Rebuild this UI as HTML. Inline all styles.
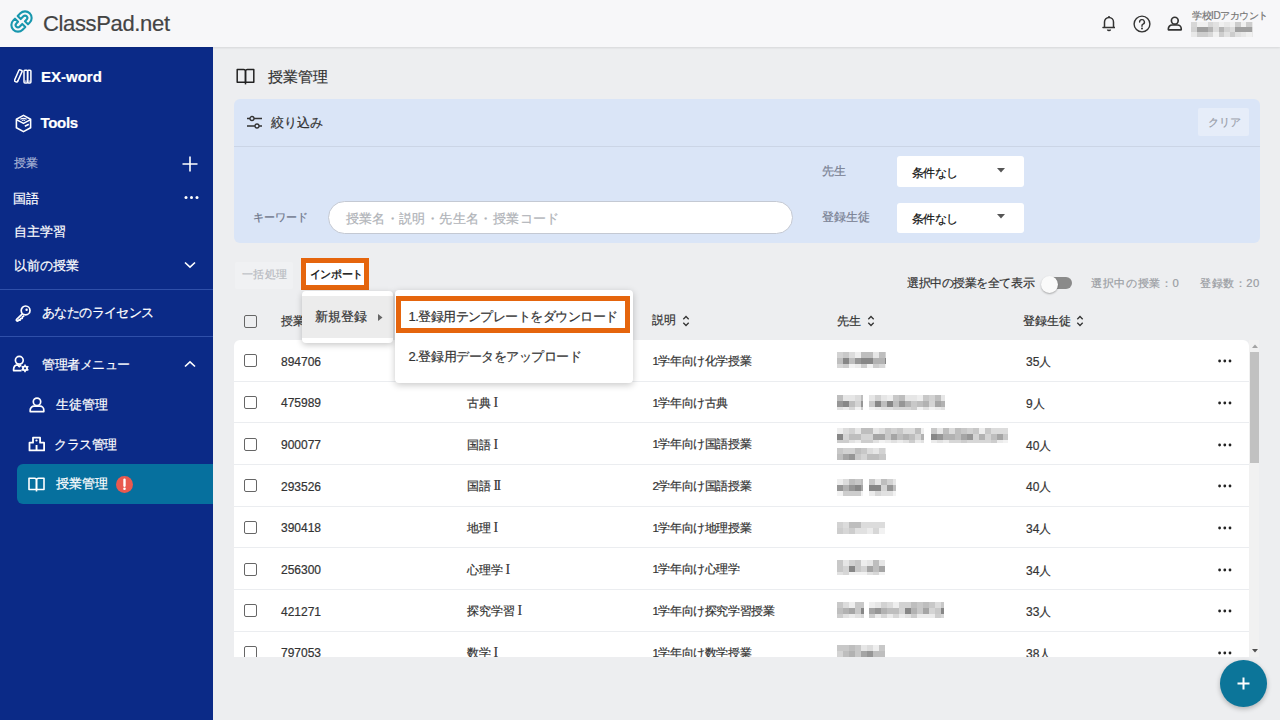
<!DOCTYPE html>
<html lang="ja">
<head>
<meta charset="utf-8">
<style>
*{box-sizing:border-box;margin:0;padding:0}
html,body{width:1280px;height:720px;overflow:hidden}
body{font-family:"Liberation Sans",sans-serif;background:#edeef0;color:#333;position:relative}
.abs{position:absolute}
.t{position:absolute;white-space:nowrap;line-height:1;-webkit-text-stroke:0.2px currentColor}
#hdr{position:absolute;left:0;top:0;width:1280px;height:46.7px;background:#f7f7f9;box-shadow:0 1px 2px rgba(0,0,0,.10);z-index:5}
#side{position:absolute;left:0;top:46.7px;width:213.3px;height:673.3px;background:#0b2a87;color:#fff}
.sw{color:#fff}
.hr{position:absolute;left:0;width:213px;height:1.4px;background:#2f4fa9}
#panel{position:absolute;left:234px;top:99px;width:1026px;height:144px;background:#dae5f7;border-radius:6px}
#table{position:absolute;left:234px;top:340px;width:1015px;height:317px;background:#fff;border-radius:6px 6px 0 0;overflow:hidden}
.row{position:absolute;left:0;width:1015px;height:41.5px;border-top:1px solid #eceef0}
.cb{position:absolute;width:13px;height:13px;border:1.6px solid #666;border-radius:2px}
.rn{font-family:"Liberation Serif",serif;font-size:14px;line-height:0;margin-left:2.5px;-webkit-text-stroke:0.1px currentColor}
.blur{position:absolute;background:#ccc;filter:blur(1px)}
</style>
</head>
<body>
<div id="hdr">
  <svg class="abs" style="left:8px;top:8px" width="27" height="27" viewBox="-13.5 -13.5 27 27">
  <g transform="rotate(-45)" fill="none" stroke="#1897ae" stroke-width="2.1" stroke-linejoin="round">
    <path d="M1.2 -6.6 H5 A6.6 6.6 0 0 1 5 6.6 H2.6 V2.3 H5 A2.3 2.3 0 0 0 5 -2.3 H1.2 Z"/>
    <path d="M-1.2 6.6 H-5 A6.6 6.6 0 0 1 -5 -6.6 H-2.6 V-2.3 H-5 A2.3 2.3 0 0 0 -5 2.3 H-1.2 Z"/>
  </g>
</svg>
  <div class="t" style="left:43px;top:12.5px;font-size:22px;color:#444;letter-spacing:-0.35px">ClassPad.net</div>
  <!-- bell -->
  <svg class="abs" style="left:1100px;top:14px" width="18" height="18" viewBox="0 0 18 18">
    <g fill="none" stroke="#333" stroke-width="1.5" stroke-linejoin="round">
      <path d="M4.5 13.5 V8 a4.5 4.5 0 0 1 9 0 V13.5 H3 H15"/>
      <path d="M7.5 15.5 a1.6 1.6 0 0 0 3 0"/>
      <path d="M9 2 V3.5"/>
    </g>
  </svg>
  <!-- help -->
  <svg class="abs" style="left:1133px;top:14.5px" width="18" height="18" viewBox="0 0 18 18">
    <g fill="none" stroke="#333" stroke-width="1.4">
      <circle cx="9" cy="9" r="7.9"/>
      <path d="M6.6 7 a2.4 2.4 0 1 1 3.4 2.2 c-.7 .3 -1 .8 -1 1.5 V11.3" stroke-linecap="round"/>
    </g>
    <circle cx="9" cy="13.4" r="1" fill="#333"/>
  </svg>
  <!-- user -->
  <svg class="abs" style="left:1167.3px;top:16.2px" width="15.6" height="15.2" viewBox="0 0 17 16">
    <g fill="none" stroke="#333" stroke-width="1.8">
      <circle cx="8.5" cy="4.8" r="3.7"/>
      <path d="M1.5 14.8 V13.5 a4 4 0 0 1 4 -4 H11.5 a4 4 0 0 1 4 4 V14.8 Z" stroke-linejoin="round"/>
    </g>
  </svg>
  <div class="t" style="left:1192px;top:11.3px;font-size:10px;letter-spacing:-0.45px;color:#777">学校IDアカウント</div>
  <div class="abs" style="left:1191px;top:22.3px;width:62px;height:14.5px;overflow:hidden;filter:blur(0.7px)"><div style="position:absolute;left:0.0px;top:0.0px;width:5.5px;height:4.9px;background:rgb(215,215,215)"></div><div style="position:absolute;left:5.5px;top:0.0px;width:5.5px;height:4.9px;background:rgb(240,240,240)"></div><div style="position:absolute;left:11.0px;top:0.0px;width:5.5px;height:4.9px;background:rgb(240,240,240)"></div><div style="position:absolute;left:16.5px;top:0.0px;width:5.5px;height:4.9px;background:rgb(215,215,215)"></div><div style="position:absolute;left:22.0px;top:0.0px;width:5.5px;height:4.9px;background:rgb(225,225,225)"></div><div style="position:absolute;left:27.5px;top:0.0px;width:5.5px;height:4.9px;background:rgb(240,240,240)"></div><div style="position:absolute;left:33.0px;top:0.0px;width:5.5px;height:4.9px;background:rgb(232,232,232)"></div><div style="position:absolute;left:38.5px;top:0.0px;width:5.5px;height:4.9px;background:rgb(240,240,240)"></div><div style="position:absolute;left:44.0px;top:0.0px;width:5.5px;height:4.9px;background:rgb(205,205,205)"></div><div style="position:absolute;left:49.5px;top:0.0px;width:5.5px;height:4.9px;background:rgb(240,240,240)"></div><div style="position:absolute;left:55.0px;top:0.0px;width:5.5px;height:4.9px;background:rgb(205,205,205)"></div><div style="position:absolute;left:60.5px;top:0.0px;width:5.5px;height:4.9px;background:rgb(232,232,232)"></div><div style="position:absolute;left:0.0px;top:4.9px;width:5.5px;height:4.9px;background:rgb(210,210,210)"></div><div style="position:absolute;left:5.5px;top:4.9px;width:5.5px;height:4.9px;background:rgb(160,160,160)"></div><div style="position:absolute;left:11.0px;top:4.9px;width:5.5px;height:4.9px;background:rgb(160,160,160)"></div><div style="position:absolute;left:16.5px;top:4.9px;width:5.5px;height:4.9px;background:rgb(180,180,180)"></div><div style="position:absolute;left:22.0px;top:4.9px;width:5.5px;height:4.9px;background:rgb(220,220,220)"></div><div style="position:absolute;left:27.5px;top:4.9px;width:5.5px;height:4.9px;background:rgb(180,180,180)"></div><div style="position:absolute;left:33.0px;top:4.9px;width:5.5px;height:4.9px;background:rgb(210,210,210)"></div><div style="position:absolute;left:38.5px;top:4.9px;width:5.5px;height:4.9px;background:rgb(220,220,220)"></div><div style="position:absolute;left:44.0px;top:4.9px;width:5.5px;height:4.9px;background:rgb(160,160,160)"></div><div style="position:absolute;left:49.5px;top:4.9px;width:5.5px;height:4.9px;background:rgb(160,160,160)"></div><div style="position:absolute;left:55.0px;top:4.9px;width:5.5px;height:4.9px;background:rgb(160,160,160)"></div><div style="position:absolute;left:60.5px;top:4.9px;width:5.5px;height:4.9px;background:rgb(220,220,220)"></div><div style="position:absolute;left:0.0px;top:9.8px;width:5.5px;height:4.9px;background:rgb(232,232,232)"></div><div style="position:absolute;left:5.5px;top:9.8px;width:5.5px;height:4.9px;background:rgb(205,205,205)"></div><div style="position:absolute;left:11.0px;top:9.8px;width:5.5px;height:4.9px;background:rgb(205,205,205)"></div><div style="position:absolute;left:16.5px;top:9.8px;width:5.5px;height:4.9px;background:rgb(215,215,215)"></div><div style="position:absolute;left:22.0px;top:9.8px;width:5.5px;height:4.9px;background:rgb(240,240,240)"></div><div style="position:absolute;left:27.5px;top:9.8px;width:5.5px;height:4.9px;background:rgb(205,205,205)"></div><div style="position:absolute;left:33.0px;top:9.8px;width:5.5px;height:4.9px;background:rgb(225,225,225)"></div><div style="position:absolute;left:38.5px;top:9.8px;width:5.5px;height:4.9px;background:rgb(205,205,205)"></div><div style="position:absolute;left:44.0px;top:9.8px;width:5.5px;height:4.9px;background:rgb(225,225,225)"></div><div style="position:absolute;left:49.5px;top:9.8px;width:5.5px;height:4.9px;background:rgb(232,232,232)"></div><div style="position:absolute;left:55.0px;top:9.8px;width:5.5px;height:4.9px;background:rgb(240,240,240)"></div><div style="position:absolute;left:60.5px;top:9.8px;width:5.5px;height:4.9px;background:rgb(232,232,232)"></div></div>
</div>
<div id="side"></div>
<!-- sidebar content -->
<svg class="abs" style="left:14px;top:68px" width="18" height="16" viewBox="0 0 18 16">
  <g fill="none" stroke="#fff" stroke-width="1.5" stroke-linejoin="round">
    <rect x="2.6" y="1.6" width="3.4" height="12.6" rx="0.9" transform="rotate(24 4.3 7.9)"/>
    <rect x="10" y="2.2" width="3.6" height="12.8" rx="0.9"/>
    <rect x="13.6" y="2.2" width="3.3" height="12.8" rx="0.9"/>
  </g>
  <g fill="#fff"><rect x="11" y="12.6" width="1.6" height="1"/><rect x="14.6" y="12.6" width="1.6" height="1"/><rect x="3" y="12.3" width="1.5" height="1" transform="rotate(27 3.8 12.8)"/></g>
</svg>
<div class="t sw" style="left:41px;top:69px;font-size:15px;font-weight:bold">EX-word</div>
<svg class="abs" style="left:14px;top:114px" width="19" height="19" viewBox="0 0 19 19">
  <g fill="none" stroke="#fff" stroke-width="1.6" stroke-linejoin="round">
    <path d="M9.5 1.4 L16.6 5.2 V13.8 L9.5 17.6 L2.4 13.8 V5.2 Z"/>
    <path d="M2.4 5.6 L9.5 9.4 L16.6 5.6"/>
    <path d="M6.3 5.3 a4.4 2.4 0 0 1 6.4 0" stroke-width="1.1"/>
    <path d="M7.9 6.6 a2 1.1 0 0 1 3.2 0" stroke-width="1.1"/>
    <path d="M10.8 12.3 L14.8 10.3" stroke-width="1.7"/>
  </g>
</svg>
<div class="t sw" style="left:40.5px;top:114.8px;font-size:15px;letter-spacing:-0.3px;font-weight:bold">Tools</div>
<div class="t" style="left:13.5px;top:157px;font-size:12px;color:#a9b4d6">授業</div>
<svg class="abs" style="left:182px;top:155.5px" width="16" height="16" viewBox="0 0 16 16"><path d="M8 0.5 V15.5 M0.5 8 H15.5" stroke="#fff" stroke-width="1.6"/></svg>
<div class="t sw" style="left:13px;top:191.5px;font-size:13px">国語</div>
<svg class="abs" style="left:184px;top:195px" width="15" height="5" viewBox="0 0 15 5"><g fill="#fff"><circle cx="2" cy="2.5" r="1.5"/><circle cx="7.5" cy="2.5" r="1.5"/><circle cx="13" cy="2.5" r="1.5"/></g></svg>
<div class="t sw" style="left:14px;top:225px;font-size:13px">自主学習</div>
<div class="t sw" style="left:13.5px;top:259px;font-size:13px">以前の授業</div>
<svg class="abs" style="left:184px;top:261px" width="12" height="8" viewBox="0 0 12 8"><path d="M1 1.5 L6 6.2 L11 1.5" fill="none" stroke="#fff" stroke-width="1.6"/></svg>
<div class="hr" style="top:288.8px"></div>
<svg class="abs" style="left:14px;top:304px" width="18" height="18" viewBox="0 0 18 18">
  <g fill="none" stroke="#fff" stroke-width="1.7" stroke-linejoin="round">
    <circle cx="11.6" cy="6.4" r="4.4"/>
    <path d="M8.6 9.6 L2.6 15.4 a1 1 0 0 0 1.4 1.4 L5 15.8 L6 16.2 L6.6 14.6 L8.2 14.4 L8.4 13 L10.2 11.6"/>
  </g>
  <circle cx="12.6" cy="5.8" r="1.2" fill="#fff"/>
</svg>
<div class="t sw" style="left:42px;top:305.8px;font-size:13px;letter-spacing:-0.6px">あなたのライセンス</div>
<div class="hr" style="top:336px"></div>
<svg class="abs" style="left:12px;top:355px" width="18" height="18" viewBox="0 0 18 18">
  <g fill="none" stroke="#fff" stroke-width="1.7" stroke-linejoin="round">
    <circle cx="7.3" cy="5.3" r="3.9"/>
    <path d="M9.5 15.6 H1.6 V14.2 a4.5 4.5 0 0 1 4 -4.4 L7.3 11.6 L9 9.9"/>
  </g>
  <g transform="translate(13,13.3)">
    <circle r="2.9" fill="#fff"/>
    <g stroke="#fff" stroke-width="1.6"><path d="M0 -3.9 V3.9 M-3.4 -1.95 L3.4 1.95 M-3.4 1.95 L3.4 -1.95"/></g>
    <circle r="1.1" fill="#0b2a87"/>
  </g>
</svg>
<div class="t sw" style="left:42px;top:357.8px;font-size:13px;letter-spacing:-0.5px">管理者メニュー</div>
<svg class="abs" style="left:184px;top:360px" width="12" height="8" viewBox="0 0 12 8"><path d="M1 6.5 L6 1.8 L11 6.5" fill="none" stroke="#fff" stroke-width="1.6"/></svg>
<svg class="abs" style="left:28.5px;top:397px" width="16" height="16" viewBox="0 0 16 16">
  <g fill="none" stroke="#fff" stroke-width="1.7" stroke-linejoin="round">
    <circle cx="8" cy="4.8" r="3.7"/>
    <path d="M1.2 14.6 V13 a3.8 3.8 0 0 1 3.8 -3.8 H11 a3.8 3.8 0 0 1 3.8 3.8 V14.6 Z"/>
  </g>
</svg>
<div class="t sw" style="left:56px;top:397.5px;font-size:13px">生徒管理</div>
<svg class="abs" style="left:28px;top:436px" width="18" height="16" viewBox="0 0 18 16">
  <g fill="none" stroke="#fff" stroke-width="1.8" stroke-linejoin="round">
    <path d="M5 1.7 H12.1 V6.7 H16.1 V14.4 H1.5 V6.7 H5 Z"/>
  </g>
  <circle cx="8.5" cy="4.5" r="1.1" fill="#fff"/>
  <rect x="7.6" y="9" width="1.9" height="5.5" fill="#fff"/>
</svg>
<div class="t sw" style="left:54px;top:437.8px;font-size:13px;letter-spacing:-0.5px">クラス管理</div>
<div class="abs" style="left:17px;top:464px;width:196px;height:40px;background:#06709e;border-radius:6px 0 0 6px"></div>
<svg class="abs" style="left:28px;top:477px" width="17" height="15" viewBox="0 0 17 15">
  <g fill="none" stroke="#fff" stroke-width="1.6" stroke-linejoin="round">
    <path d="M1 1.2 H6.5 a2 2 0 0 1 2 2 V12.5 H1 Z"/>
    <path d="M16 1.2 H10.5 a2 2 0 0 0 -2 2 V12.5 H16 Z"/>
    <path d="M8.5 12.5 V14.5"/>
  </g>
</svg>
<div class="t sw" style="left:56px;top:477px;font-size:13px">授業管理</div>
<svg class="abs" style="left:116px;top:476px" width="17" height="17" viewBox="0 0 17 17">
  <circle cx="8.5" cy="8.5" r="8.5" fill="#e9594f"/>
  <path d="M8.5 3.8 V9.8" stroke="#fff" stroke-width="2.4" stroke-linecap="round"/>
  <circle cx="8.5" cy="12.8" r="1.3" fill="#fff"/>
</svg>
<!-- main -->
<svg class="abs" style="left:236px;top:67.5px" width="19" height="17" viewBox="0 0 19 17">
  <g fill="none" stroke="#222" stroke-width="1.5" stroke-linejoin="round">
    <path d="M1.2 1.4 H7.6 a1.9 1.9 0 0 1 1.9 1.9 V14.2 H1.2 Z"/>
    <path d="M17.8 1.4 H11.4 a1.9 1.9 0 0 0 -1.9 1.9 V14.2 H17.8 Z"/>
    <path d="M9.5 14.2 V16.4"/>
  </g>
</svg>
<div class="t" style="left:268px;top:68.8px;font-size:15px;color:#333">授業管理</div>
<div id="panel"></div>
<svg class="abs" style="left:246px;top:115px" width="17" height="15" viewBox="0 0 17 15">
  <g fill="none" stroke="#333" stroke-width="1.3">
    <path d="M1 3.5 H4 M8 3.5 H16"/>
    <circle cx="6" cy="3.5" r="2"/>
    <path d="M1 11 H9 M13 11 H16"/>
    <circle cx="11" cy="11" r="2"/>
  </g>
</svg>
<div class="t" style="left:270.8px;top:117px;font-size:12.6px;color:#333;font-weight:500">絞り込み</div>
<div class="abs" style="left:1198px;top:107.5px;width:51px;height:28px;background:#e6edf9;border-radius:2px"></div>
<div class="t" style="left:1208px;top:117px;font-size:11px;color:#9aa0aa">クリア</div>
<div class="abs" style="left:234px;top:146px;width:1026px;height:1px;background:#cbd5e6"></div>
<div class="t" style="left:822px;top:165px;font-size:12px;color:#7a8294">先生</div>
<div class="abs" style="left:896.5px;top:156px;width:127.5px;height:30.5px;background:#fff;border-radius:3px"></div>
<div class="t" style="left:911.5px;top:166.8px;font-size:12px;letter-spacing:-0.5px;color:#111">条件なし</div>
<svg class="abs" style="left:997px;top:168px" width="8" height="5" viewBox="0 0 8 5"><path d="M0 0 H8 L4 4.5 Z" fill="#555"/></svg>
<div class="t" style="left:253px;top:211.5px;font-size:10.8px;color:#6e7689">キーワード</div>
<div class="abs" style="left:327.5px;top:200.8px;width:465px;height:33.7px;background:#fff;border:1px solid #c4c9d3;border-radius:17px"></div>
<div class="t" style="left:345.5px;top:211.5px;font-size:13px;letter-spacing:0.4px;color:#b0b3b8">授業名・説明・先生名・授業コード</div>
<div class="t" style="left:822px;top:211px;font-size:12px;color:#7a8294">登録生徒</div>
<div class="abs" style="left:896.5px;top:202.5px;width:127.5px;height:30px;background:#fff;border-radius:3px"></div>
<div class="t" style="left:911.5px;top:212.8px;font-size:12px;letter-spacing:-0.5px;color:#111">条件なし</div>
<svg class="abs" style="left:997px;top:214px" width="8" height="5" viewBox="0 0 8 5"><path d="M0 0 H8 L4 4.5 Z" fill="#555"/></svg>

<!-- action row -->
<div class="abs" style="left:235px;top:261.5px;width:58px;height:27.5px;background:#f0f1f3;border-radius:2px"></div>
<div class="t" style="left:241.8px;top:269px;font-size:11.2px;letter-spacing:0.5px;color:#b9bcc2">一括処理</div>
<div class="abs" style="left:301px;top:258px;width:68px;height:32px;border:5px solid #e5650d;background:#fff"></div>
<div class="t" style="left:309.8px;top:269px;font-size:11px;letter-spacing:-0.4px;color:#111;-webkit-text-stroke:0.35px #111">インポート</div>
<div class="t" style="left:907px;top:278.3px;font-size:11.5px;letter-spacing:-0.45px;color:#333">選択中の授業を全て表示</div>
<div class="abs" style="left:1045px;top:277px;width:27px;height:12px;background:#8a8a8a;border-radius:6px"></div>
<div class="abs" style="left:1040.5px;top:275.5px;width:17px;height:17px;background:#fafafa;border-radius:50%;box-shadow:0 1px 2px rgba(0,0,0,.3)"></div>
<div class="t" style="left:1091.3px;top:278.3px;font-size:11.3px;letter-spacing:0.6px;color:#9a9da3">選択中の授業：0</div>
<div class="t" style="left:1200.3px;top:278.3px;font-size:11.3px;letter-spacing:0.5px;color:#9a9da3">登録数：20</div>
<div id="table">
<div class="cb" style="left:10px;top:14.33px"></div>
<div class="t" style="left:47px;top:15.53px;font-size:12px;color:#333">894706</div>
<div class="t" style="left:233px;top:16.23px;font-size:11.8px;color:#333">化学<span class="rn">I</span></div>
<div class="t" style="left:418.5px;top:15.93px;font-size:11.5px;letter-spacing:-0.4px;color:#333">1学年向け化学授業</div>
<div class="t" style="left:792px;top:16.23px;font-size:12px;color:#333">35人</div>
<svg class="abs" style="left:984px;top:19.33px" width="14" height="4" viewBox="0 0 14 4"><g fill="#222"><circle cx="1.6" cy="2" r="1.4"/><circle cx="6.8" cy="2" r="1.4"/><circle cx="12" cy="2" r="1.4"/></g></svg>
<div class="abs" style="left:603.0px;top:12.0px;width:48.5px;height:16.0px;overflow:hidden;filter:blur(0.6px)"><div style="position:absolute;left:0.0px;top:0.0px;width:6px;height:6px;background:rgb(210,210,210)"></div><div style="position:absolute;left:6.0px;top:0.0px;width:6px;height:6px;background:rgb(200,200,200)"></div><div style="position:absolute;left:12.0px;top:0.0px;width:6px;height:6px;background:rgb(220,220,220)"></div><div style="position:absolute;left:18.0px;top:0.0px;width:6px;height:6px;background:rgb(238,238,238)"></div><div style="position:absolute;left:24.0px;top:0.0px;width:6px;height:6px;background:rgb(190,190,190)"></div><div style="position:absolute;left:30.0px;top:0.0px;width:6px;height:6px;background:rgb(190,190,190)"></div><div style="position:absolute;left:36.0px;top:0.0px;width:6px;height:6px;background:rgb(230,230,230)"></div><div style="position:absolute;left:42.0px;top:0.0px;width:6px;height:6px;background:rgb(190,190,190)"></div><div style="position:absolute;left:48.0px;top:0.0px;width:6px;height:6px;background:rgb(210,210,210)"></div><div style="position:absolute;left:0.0px;top:6.0px;width:6px;height:6px;background:rgb(190,190,190)"></div><div style="position:absolute;left:6.0px;top:6.0px;width:6px;height:6px;background:rgb(135,135,135)"></div><div style="position:absolute;left:12.0px;top:6.0px;width:6px;height:6px;background:rgb(190,190,190)"></div><div style="position:absolute;left:18.0px;top:6.0px;width:6px;height:6px;background:rgb(150,150,150)"></div><div style="position:absolute;left:24.0px;top:6.0px;width:6px;height:6px;background:rgb(135,135,135)"></div><div style="position:absolute;left:30.0px;top:6.0px;width:6px;height:6px;background:rgb(135,135,135)"></div><div style="position:absolute;left:36.0px;top:6.0px;width:6px;height:6px;background:rgb(178,178,178)"></div><div style="position:absolute;left:42.0px;top:6.0px;width:6px;height:6px;background:rgb(178,178,178)"></div><div style="position:absolute;left:48.0px;top:6.0px;width:6px;height:6px;background:rgb(135,135,135)"></div><div style="position:absolute;left:0.0px;top:12.0px;width:6px;height:6px;background:rgb(215,215,215)"></div><div style="position:absolute;left:6.0px;top:12.0px;width:6px;height:6px;background:rgb(205,205,205)"></div><div style="position:absolute;left:12.0px;top:12.0px;width:6px;height:6px;background:rgb(242,242,242)"></div><div style="position:absolute;left:18.0px;top:12.0px;width:6px;height:6px;background:rgb(235,235,235)"></div><div style="position:absolute;left:24.0px;top:12.0px;width:6px;height:6px;background:rgb(205,205,205)"></div><div style="position:absolute;left:30.0px;top:12.0px;width:6px;height:6px;background:rgb(242,242,242)"></div><div style="position:absolute;left:36.0px;top:12.0px;width:6px;height:6px;background:rgb(205,205,205)"></div><div style="position:absolute;left:42.0px;top:12.0px;width:6px;height:6px;background:rgb(215,215,215)"></div><div style="position:absolute;left:48.0px;top:12.0px;width:6px;height:6px;background:rgb(242,242,242)"></div></div>
<div class="abs" style="left:0;top:40.80px;width:1015px;height:1px;background:#ebedf0"></div>
<div class="cb" style="left:10px;top:56.00px"></div>
<div class="t" style="left:47px;top:57.20px;font-size:12px;color:#333">475989</div>
<div class="t" style="left:233px;top:57.90px;font-size:11.8px;color:#333">古典<span class="rn">I</span></div>
<div class="t" style="left:418.5px;top:57.60px;font-size:11.5px;letter-spacing:-0.4px;color:#333">1学年向け古典</div>
<div class="t" style="left:792px;top:57.90px;font-size:12px;color:#333">9人</div>
<svg class="abs" style="left:984px;top:61.00px" width="14" height="4" viewBox="0 0 14 4"><g fill="#222"><circle cx="1.6" cy="2" r="1.4"/><circle cx="6.8" cy="2" r="1.4"/><circle cx="12" cy="2" r="1.4"/></g></svg>
<div class="abs" style="left:603.0px;top:54.5px;width:26.0px;height:15.5px;overflow:hidden;filter:blur(0.6px)"><div style="position:absolute;left:0.0px;top:0.0px;width:6px;height:6px;background:rgb(190,190,190)"></div><div style="position:absolute;left:6.0px;top:0.0px;width:6px;height:6px;background:rgb(230,230,230)"></div><div style="position:absolute;left:12.0px;top:0.0px;width:6px;height:6px;background:rgb(230,230,230)"></div><div style="position:absolute;left:18.0px;top:0.0px;width:6px;height:6px;background:rgb(220,220,220)"></div><div style="position:absolute;left:24.0px;top:0.0px;width:6px;height:6px;background:rgb(190,190,190)"></div><div style="position:absolute;left:0.0px;top:6.0px;width:6px;height:6px;background:rgb(150,150,150)"></div><div style="position:absolute;left:6.0px;top:6.0px;width:6px;height:6px;background:rgb(135,135,135)"></div><div style="position:absolute;left:12.0px;top:6.0px;width:6px;height:6px;background:rgb(190,190,190)"></div><div style="position:absolute;left:18.0px;top:6.0px;width:6px;height:6px;background:rgb(212,212,212)"></div><div style="position:absolute;left:24.0px;top:6.0px;width:6px;height:6px;background:rgb(150,150,150)"></div><div style="position:absolute;left:0.0px;top:12.0px;width:6px;height:6px;background:rgb(225,225,225)"></div><div style="position:absolute;left:6.0px;top:12.0px;width:6px;height:6px;background:rgb(235,235,235)"></div><div style="position:absolute;left:12.0px;top:12.0px;width:6px;height:6px;background:rgb(215,215,215)"></div><div style="position:absolute;left:18.0px;top:12.0px;width:6px;height:6px;background:rgb(242,242,242)"></div><div style="position:absolute;left:24.0px;top:12.0px;width:6px;height:6px;background:rgb(205,205,205)"></div></div>
<div class="abs" style="left:635.0px;top:54.5px;width:76.0px;height:15.5px;overflow:hidden;filter:blur(0.6px)"><div style="position:absolute;left:0.0px;top:0.0px;width:6px;height:6px;background:rgb(230,230,230)"></div><div style="position:absolute;left:6.0px;top:0.0px;width:6px;height:6px;background:rgb(210,210,210)"></div><div style="position:absolute;left:12.0px;top:0.0px;width:6px;height:6px;background:rgb(230,230,230)"></div><div style="position:absolute;left:18.0px;top:0.0px;width:6px;height:6px;background:rgb(238,238,238)"></div><div style="position:absolute;left:24.0px;top:0.0px;width:6px;height:6px;background:rgb(200,200,200)"></div><div style="position:absolute;left:30.0px;top:0.0px;width:6px;height:6px;background:rgb(190,190,190)"></div><div style="position:absolute;left:36.0px;top:0.0px;width:6px;height:6px;background:rgb(230,230,230)"></div><div style="position:absolute;left:42.0px;top:0.0px;width:6px;height:6px;background:rgb(230,230,230)"></div><div style="position:absolute;left:48.0px;top:0.0px;width:6px;height:6px;background:rgb(238,238,238)"></div><div style="position:absolute;left:54.0px;top:0.0px;width:6px;height:6px;background:rgb(200,200,200)"></div><div style="position:absolute;left:60.0px;top:0.0px;width:6px;height:6px;background:rgb(210,210,210)"></div><div style="position:absolute;left:66.0px;top:0.0px;width:6px;height:6px;background:rgb(190,190,190)"></div><div style="position:absolute;left:72.0px;top:0.0px;width:6px;height:6px;background:rgb(230,230,230)"></div><div style="position:absolute;left:0.0px;top:6.0px;width:6px;height:6px;background:rgb(200,200,200)"></div><div style="position:absolute;left:6.0px;top:6.0px;width:6px;height:6px;background:rgb(135,135,135)"></div><div style="position:absolute;left:12.0px;top:6.0px;width:6px;height:6px;background:rgb(190,190,190)"></div><div style="position:absolute;left:18.0px;top:6.0px;width:6px;height:6px;background:rgb(135,135,135)"></div><div style="position:absolute;left:24.0px;top:6.0px;width:6px;height:6px;background:rgb(190,190,190)"></div><div style="position:absolute;left:30.0px;top:6.0px;width:6px;height:6px;background:rgb(150,150,150)"></div><div style="position:absolute;left:36.0px;top:6.0px;width:6px;height:6px;background:rgb(178,178,178)"></div><div style="position:absolute;left:42.0px;top:6.0px;width:6px;height:6px;background:rgb(200,200,200)"></div><div style="position:absolute;left:48.0px;top:6.0px;width:6px;height:6px;background:rgb(190,190,190)"></div><div style="position:absolute;left:54.0px;top:6.0px;width:6px;height:6px;background:rgb(178,178,178)"></div><div style="position:absolute;left:60.0px;top:6.0px;width:6px;height:6px;background:rgb(212,212,212)"></div><div style="position:absolute;left:66.0px;top:6.0px;width:6px;height:6px;background:rgb(165,165,165)"></div><div style="position:absolute;left:72.0px;top:6.0px;width:6px;height:6px;background:rgb(178,178,178)"></div><div style="position:absolute;left:0.0px;top:12.0px;width:6px;height:6px;background:rgb(242,242,242)"></div><div style="position:absolute;left:6.0px;top:12.0px;width:6px;height:6px;background:rgb(235,235,235)"></div><div style="position:absolute;left:12.0px;top:12.0px;width:6px;height:6px;background:rgb(225,225,225)"></div><div style="position:absolute;left:18.0px;top:12.0px;width:6px;height:6px;background:rgb(225,225,225)"></div><div style="position:absolute;left:24.0px;top:12.0px;width:6px;height:6px;background:rgb(215,215,215)"></div><div style="position:absolute;left:30.0px;top:12.0px;width:6px;height:6px;background:rgb(215,215,215)"></div><div style="position:absolute;left:36.0px;top:12.0px;width:6px;height:6px;background:rgb(215,215,215)"></div><div style="position:absolute;left:42.0px;top:12.0px;width:6px;height:6px;background:rgb(205,205,205)"></div><div style="position:absolute;left:48.0px;top:12.0px;width:6px;height:6px;background:rgb(242,242,242)"></div><div style="position:absolute;left:54.0px;top:12.0px;width:6px;height:6px;background:rgb(225,225,225)"></div><div style="position:absolute;left:60.0px;top:12.0px;width:6px;height:6px;background:rgb(242,242,242)"></div><div style="position:absolute;left:66.0px;top:12.0px;width:6px;height:6px;background:rgb(235,235,235)"></div><div style="position:absolute;left:72.0px;top:12.0px;width:6px;height:6px;background:rgb(225,225,225)"></div></div>
<div class="abs" style="left:0;top:82.47px;width:1015px;height:1px;background:#ebedf0"></div>
<div class="cb" style="left:10px;top:97.67px"></div>
<div class="t" style="left:47px;top:98.87px;font-size:12px;color:#333">900077</div>
<div class="t" style="left:233px;top:99.57px;font-size:11.8px;color:#333">国語<span class="rn">I</span></div>
<div class="t" style="left:418.5px;top:99.27px;font-size:11.5px;letter-spacing:-0.4px;color:#333">1学年向け国語授業</div>
<div class="t" style="left:792px;top:99.57px;font-size:12px;color:#333">40人</div>
<svg class="abs" style="left:984px;top:102.67px" width="14" height="4" viewBox="0 0 14 4"><g fill="#222"><circle cx="1.6" cy="2" r="1.4"/><circle cx="6.8" cy="2" r="1.4"/><circle cx="12" cy="2" r="1.4"/></g></svg>
<div class="abs" style="left:603.0px;top:87.5px;width:87.0px;height:15.0px;overflow:hidden;filter:blur(0.6px)"><div style="position:absolute;left:0.0px;top:0.0px;width:6px;height:6px;background:rgb(238,238,238)"></div><div style="position:absolute;left:6.0px;top:0.0px;width:6px;height:6px;background:rgb(220,220,220)"></div><div style="position:absolute;left:12.0px;top:0.0px;width:6px;height:6px;background:rgb(210,210,210)"></div><div style="position:absolute;left:18.0px;top:0.0px;width:6px;height:6px;background:rgb(230,230,230)"></div><div style="position:absolute;left:24.0px;top:0.0px;width:6px;height:6px;background:rgb(190,190,190)"></div><div style="position:absolute;left:30.0px;top:0.0px;width:6px;height:6px;background:rgb(190,190,190)"></div><div style="position:absolute;left:36.0px;top:0.0px;width:6px;height:6px;background:rgb(230,230,230)"></div><div style="position:absolute;left:42.0px;top:0.0px;width:6px;height:6px;background:rgb(220,220,220)"></div><div style="position:absolute;left:48.0px;top:0.0px;width:6px;height:6px;background:rgb(200,200,200)"></div><div style="position:absolute;left:54.0px;top:0.0px;width:6px;height:6px;background:rgb(210,210,210)"></div><div style="position:absolute;left:60.0px;top:0.0px;width:6px;height:6px;background:rgb(200,200,200)"></div><div style="position:absolute;left:66.0px;top:0.0px;width:6px;height:6px;background:rgb(220,220,220)"></div><div style="position:absolute;left:72.0px;top:0.0px;width:6px;height:6px;background:rgb(220,220,220)"></div><div style="position:absolute;left:78.0px;top:0.0px;width:6px;height:6px;background:rgb(190,190,190)"></div><div style="position:absolute;left:84.0px;top:0.0px;width:6px;height:6px;background:rgb(238,238,238)"></div><div style="position:absolute;left:0.0px;top:6.0px;width:6px;height:6px;background:rgb(135,135,135)"></div><div style="position:absolute;left:6.0px;top:6.0px;width:6px;height:6px;background:rgb(212,212,212)"></div><div style="position:absolute;left:12.0px;top:6.0px;width:6px;height:6px;background:rgb(190,190,190)"></div><div style="position:absolute;left:18.0px;top:6.0px;width:6px;height:6px;background:rgb(190,190,190)"></div><div style="position:absolute;left:24.0px;top:6.0px;width:6px;height:6px;background:rgb(212,212,212)"></div><div style="position:absolute;left:30.0px;top:6.0px;width:6px;height:6px;background:rgb(212,212,212)"></div><div style="position:absolute;left:36.0px;top:6.0px;width:6px;height:6px;background:rgb(165,165,165)"></div><div style="position:absolute;left:42.0px;top:6.0px;width:6px;height:6px;background:rgb(165,165,165)"></div><div style="position:absolute;left:48.0px;top:6.0px;width:6px;height:6px;background:rgb(200,200,200)"></div><div style="position:absolute;left:54.0px;top:6.0px;width:6px;height:6px;background:rgb(165,165,165)"></div><div style="position:absolute;left:60.0px;top:6.0px;width:6px;height:6px;background:rgb(190,190,190)"></div><div style="position:absolute;left:66.0px;top:6.0px;width:6px;height:6px;background:rgb(178,178,178)"></div><div style="position:absolute;left:72.0px;top:6.0px;width:6px;height:6px;background:rgb(190,190,190)"></div><div style="position:absolute;left:78.0px;top:6.0px;width:6px;height:6px;background:rgb(212,212,212)"></div><div style="position:absolute;left:84.0px;top:6.0px;width:6px;height:6px;background:rgb(178,178,178)"></div><div style="position:absolute;left:0.0px;top:12.0px;width:6px;height:6px;background:rgb(205,205,205)"></div><div style="position:absolute;left:6.0px;top:12.0px;width:6px;height:6px;background:rgb(205,205,205)"></div><div style="position:absolute;left:12.0px;top:12.0px;width:6px;height:6px;background:rgb(225,225,225)"></div><div style="position:absolute;left:18.0px;top:12.0px;width:6px;height:6px;background:rgb(235,235,235)"></div><div style="position:absolute;left:24.0px;top:12.0px;width:6px;height:6px;background:rgb(205,205,205)"></div><div style="position:absolute;left:30.0px;top:12.0px;width:6px;height:6px;background:rgb(205,205,205)"></div><div style="position:absolute;left:36.0px;top:12.0px;width:6px;height:6px;background:rgb(225,225,225)"></div><div style="position:absolute;left:42.0px;top:12.0px;width:6px;height:6px;background:rgb(242,242,242)"></div><div style="position:absolute;left:48.0px;top:12.0px;width:6px;height:6px;background:rgb(235,235,235)"></div><div style="position:absolute;left:54.0px;top:12.0px;width:6px;height:6px;background:rgb(225,225,225)"></div><div style="position:absolute;left:60.0px;top:12.0px;width:6px;height:6px;background:rgb(235,235,235)"></div><div style="position:absolute;left:66.0px;top:12.0px;width:6px;height:6px;background:rgb(225,225,225)"></div><div style="position:absolute;left:72.0px;top:12.0px;width:6px;height:6px;background:rgb(205,205,205)"></div><div style="position:absolute;left:78.0px;top:12.0px;width:6px;height:6px;background:rgb(235,235,235)"></div><div style="position:absolute;left:84.0px;top:12.0px;width:6px;height:6px;background:rgb(225,225,225)"></div></div>
<div class="abs" style="left:697.0px;top:87.5px;width:76.5px;height:15.0px;overflow:hidden;filter:blur(0.6px)"><div style="position:absolute;left:0.0px;top:0.0px;width:6px;height:6px;background:rgb(200,200,200)"></div><div style="position:absolute;left:6.0px;top:0.0px;width:6px;height:6px;background:rgb(230,230,230)"></div><div style="position:absolute;left:12.0px;top:0.0px;width:6px;height:6px;background:rgb(190,190,190)"></div><div style="position:absolute;left:18.0px;top:0.0px;width:6px;height:6px;background:rgb(220,220,220)"></div><div style="position:absolute;left:24.0px;top:0.0px;width:6px;height:6px;background:rgb(190,190,190)"></div><div style="position:absolute;left:30.0px;top:0.0px;width:6px;height:6px;background:rgb(200,200,200)"></div><div style="position:absolute;left:36.0px;top:0.0px;width:6px;height:6px;background:rgb(210,210,210)"></div><div style="position:absolute;left:42.0px;top:0.0px;width:6px;height:6px;background:rgb(200,200,200)"></div><div style="position:absolute;left:48.0px;top:0.0px;width:6px;height:6px;background:rgb(238,238,238)"></div><div style="position:absolute;left:54.0px;top:0.0px;width:6px;height:6px;background:rgb(200,200,200)"></div><div style="position:absolute;left:60.0px;top:0.0px;width:6px;height:6px;background:rgb(220,220,220)"></div><div style="position:absolute;left:66.0px;top:0.0px;width:6px;height:6px;background:rgb(220,220,220)"></div><div style="position:absolute;left:72.0px;top:0.0px;width:6px;height:6px;background:rgb(220,220,220)"></div><div style="position:absolute;left:0.0px;top:6.0px;width:6px;height:6px;background:rgb(135,135,135)"></div><div style="position:absolute;left:6.0px;top:6.0px;width:6px;height:6px;background:rgb(150,150,150)"></div><div style="position:absolute;left:12.0px;top:6.0px;width:6px;height:6px;background:rgb(178,178,178)"></div><div style="position:absolute;left:18.0px;top:6.0px;width:6px;height:6px;background:rgb(178,178,178)"></div><div style="position:absolute;left:24.0px;top:6.0px;width:6px;height:6px;background:rgb(190,190,190)"></div><div style="position:absolute;left:30.0px;top:6.0px;width:6px;height:6px;background:rgb(165,165,165)"></div><div style="position:absolute;left:36.0px;top:6.0px;width:6px;height:6px;background:rgb(150,150,150)"></div><div style="position:absolute;left:42.0px;top:6.0px;width:6px;height:6px;background:rgb(212,212,212)"></div><div style="position:absolute;left:48.0px;top:6.0px;width:6px;height:6px;background:rgb(178,178,178)"></div><div style="position:absolute;left:54.0px;top:6.0px;width:6px;height:6px;background:rgb(212,212,212)"></div><div style="position:absolute;left:60.0px;top:6.0px;width:6px;height:6px;background:rgb(190,190,190)"></div><div style="position:absolute;left:66.0px;top:6.0px;width:6px;height:6px;background:rgb(165,165,165)"></div><div style="position:absolute;left:72.0px;top:6.0px;width:6px;height:6px;background:rgb(200,200,200)"></div><div style="position:absolute;left:0.0px;top:12.0px;width:6px;height:6px;background:rgb(235,235,235)"></div><div style="position:absolute;left:6.0px;top:12.0px;width:6px;height:6px;background:rgb(225,225,225)"></div><div style="position:absolute;left:12.0px;top:12.0px;width:6px;height:6px;background:rgb(235,235,235)"></div><div style="position:absolute;left:18.0px;top:12.0px;width:6px;height:6px;background:rgb(215,215,215)"></div><div style="position:absolute;left:24.0px;top:12.0px;width:6px;height:6px;background:rgb(215,215,215)"></div><div style="position:absolute;left:30.0px;top:12.0px;width:6px;height:6px;background:rgb(205,205,205)"></div><div style="position:absolute;left:36.0px;top:12.0px;width:6px;height:6px;background:rgb(215,215,215)"></div><div style="position:absolute;left:42.0px;top:12.0px;width:6px;height:6px;background:rgb(215,215,215)"></div><div style="position:absolute;left:48.0px;top:12.0px;width:6px;height:6px;background:rgb(215,215,215)"></div><div style="position:absolute;left:54.0px;top:12.0px;width:6px;height:6px;background:rgb(215,215,215)"></div><div style="position:absolute;left:60.0px;top:12.0px;width:6px;height:6px;background:rgb(205,205,205)"></div><div style="position:absolute;left:66.0px;top:12.0px;width:6px;height:6px;background:rgb(235,235,235)"></div><div style="position:absolute;left:72.0px;top:12.0px;width:6px;height:6px;background:rgb(242,242,242)"></div></div>
<div class="abs" style="left:603.0px;top:107.5px;width:48.5px;height:12.5px;overflow:hidden;filter:blur(0.6px)"><div style="position:absolute;left:0.0px;top:0.0px;width:6px;height:6px;background:rgb(200,200,200)"></div><div style="position:absolute;left:6.0px;top:0.0px;width:6px;height:6px;background:rgb(210,210,210)"></div><div style="position:absolute;left:12.0px;top:0.0px;width:6px;height:6px;background:rgb(210,210,210)"></div><div style="position:absolute;left:18.0px;top:0.0px;width:6px;height:6px;background:rgb(190,190,190)"></div><div style="position:absolute;left:24.0px;top:0.0px;width:6px;height:6px;background:rgb(200,200,200)"></div><div style="position:absolute;left:30.0px;top:0.0px;width:6px;height:6px;background:rgb(220,220,220)"></div><div style="position:absolute;left:36.0px;top:0.0px;width:6px;height:6px;background:rgb(230,230,230)"></div><div style="position:absolute;left:42.0px;top:0.0px;width:6px;height:6px;background:rgb(210,210,210)"></div><div style="position:absolute;left:48.0px;top:0.0px;width:6px;height:6px;background:rgb(230,230,230)"></div><div style="position:absolute;left:0.0px;top:6.0px;width:6px;height:6px;background:rgb(190,190,190)"></div><div style="position:absolute;left:6.0px;top:6.0px;width:6px;height:6px;background:rgb(165,165,165)"></div><div style="position:absolute;left:12.0px;top:6.0px;width:6px;height:6px;background:rgb(150,150,150)"></div><div style="position:absolute;left:18.0px;top:6.0px;width:6px;height:6px;background:rgb(200,200,200)"></div><div style="position:absolute;left:24.0px;top:6.0px;width:6px;height:6px;background:rgb(212,212,212)"></div><div style="position:absolute;left:30.0px;top:6.0px;width:6px;height:6px;background:rgb(190,190,190)"></div><div style="position:absolute;left:36.0px;top:6.0px;width:6px;height:6px;background:rgb(190,190,190)"></div><div style="position:absolute;left:42.0px;top:6.0px;width:6px;height:6px;background:rgb(200,200,200)"></div><div style="position:absolute;left:48.0px;top:6.0px;width:6px;height:6px;background:rgb(200,200,200)"></div><div style="position:absolute;left:0.0px;top:12.0px;width:6px;height:6px;background:rgb(205,205,205)"></div><div style="position:absolute;left:6.0px;top:12.0px;width:6px;height:6px;background:rgb(235,235,235)"></div><div style="position:absolute;left:12.0px;top:12.0px;width:6px;height:6px;background:rgb(242,242,242)"></div><div style="position:absolute;left:18.0px;top:12.0px;width:6px;height:6px;background:rgb(235,235,235)"></div><div style="position:absolute;left:24.0px;top:12.0px;width:6px;height:6px;background:rgb(235,235,235)"></div><div style="position:absolute;left:30.0px;top:12.0px;width:6px;height:6px;background:rgb(235,235,235)"></div><div style="position:absolute;left:36.0px;top:12.0px;width:6px;height:6px;background:rgb(235,235,235)"></div><div style="position:absolute;left:42.0px;top:12.0px;width:6px;height:6px;background:rgb(205,205,205)"></div><div style="position:absolute;left:48.0px;top:12.0px;width:6px;height:6px;background:rgb(235,235,235)"></div></div>
<div class="abs" style="left:0;top:124.14px;width:1015px;height:1px;background:#ebedf0"></div>
<div class="cb" style="left:10px;top:139.34px"></div>
<div class="t" style="left:47px;top:140.54px;font-size:12px;color:#333">293526</div>
<div class="t" style="left:233px;top:141.24px;font-size:11.8px;color:#333">国語<span class="rn" style="letter-spacing:-1.7px">II</span></div>
<div class="t" style="left:418.5px;top:140.94px;font-size:11.5px;letter-spacing:-0.4px;color:#333">2学年向け国語授業</div>
<div class="t" style="left:792px;top:141.24px;font-size:12px;color:#333">40人</div>
<svg class="abs" style="left:984px;top:144.34px" width="14" height="4" viewBox="0 0 14 4"><g fill="#222"><circle cx="1.6" cy="2" r="1.4"/><circle cx="6.8" cy="2" r="1.4"/><circle cx="12" cy="2" r="1.4"/></g></svg>
<div class="abs" style="left:603.0px;top:139.4px;width:26.0px;height:16.6px;overflow:hidden;filter:blur(0.6px)"><div style="position:absolute;left:0.0px;top:0.0px;width:6px;height:6px;background:rgb(238,238,238)"></div><div style="position:absolute;left:6.0px;top:0.0px;width:6px;height:6px;background:rgb(220,220,220)"></div><div style="position:absolute;left:12.0px;top:0.0px;width:6px;height:6px;background:rgb(190,190,190)"></div><div style="position:absolute;left:18.0px;top:0.0px;width:6px;height:6px;background:rgb(200,200,200)"></div><div style="position:absolute;left:24.0px;top:0.0px;width:6px;height:6px;background:rgb(190,190,190)"></div><div style="position:absolute;left:0.0px;top:6.0px;width:6px;height:6px;background:rgb(150,150,150)"></div><div style="position:absolute;left:6.0px;top:6.0px;width:6px;height:6px;background:rgb(178,178,178)"></div><div style="position:absolute;left:12.0px;top:6.0px;width:6px;height:6px;background:rgb(150,150,150)"></div><div style="position:absolute;left:18.0px;top:6.0px;width:6px;height:6px;background:rgb(135,135,135)"></div><div style="position:absolute;left:24.0px;top:6.0px;width:6px;height:6px;background:rgb(165,165,165)"></div><div style="position:absolute;left:0.0px;top:12.0px;width:6px;height:6px;background:rgb(242,242,242)"></div><div style="position:absolute;left:6.0px;top:12.0px;width:6px;height:6px;background:rgb(205,205,205)"></div><div style="position:absolute;left:12.0px;top:12.0px;width:6px;height:6px;background:rgb(205,205,205)"></div><div style="position:absolute;left:18.0px;top:12.0px;width:6px;height:6px;background:rgb(205,205,205)"></div><div style="position:absolute;left:24.0px;top:12.0px;width:6px;height:6px;background:rgb(242,242,242)"></div></div>
<div class="abs" style="left:635.0px;top:139.4px;width:26.5px;height:16.6px;overflow:hidden;filter:blur(0.6px)"><div style="position:absolute;left:0.0px;top:0.0px;width:6px;height:6px;background:rgb(200,200,200)"></div><div style="position:absolute;left:6.0px;top:0.0px;width:6px;height:6px;background:rgb(230,230,230)"></div><div style="position:absolute;left:12.0px;top:0.0px;width:6px;height:6px;background:rgb(190,190,190)"></div><div style="position:absolute;left:18.0px;top:0.0px;width:6px;height:6px;background:rgb(210,210,210)"></div><div style="position:absolute;left:24.0px;top:0.0px;width:6px;height:6px;background:rgb(230,230,230)"></div><div style="position:absolute;left:0.0px;top:6.0px;width:6px;height:6px;background:rgb(135,135,135)"></div><div style="position:absolute;left:6.0px;top:6.0px;width:6px;height:6px;background:rgb(135,135,135)"></div><div style="position:absolute;left:12.0px;top:6.0px;width:6px;height:6px;background:rgb(212,212,212)"></div><div style="position:absolute;left:18.0px;top:6.0px;width:6px;height:6px;background:rgb(150,150,150)"></div><div style="position:absolute;left:24.0px;top:6.0px;width:6px;height:6px;background:rgb(190,190,190)"></div><div style="position:absolute;left:0.0px;top:12.0px;width:6px;height:6px;background:rgb(235,235,235)"></div><div style="position:absolute;left:6.0px;top:12.0px;width:6px;height:6px;background:rgb(215,215,215)"></div><div style="position:absolute;left:12.0px;top:12.0px;width:6px;height:6px;background:rgb(225,225,225)"></div><div style="position:absolute;left:18.0px;top:12.0px;width:6px;height:6px;background:rgb(225,225,225)"></div><div style="position:absolute;left:24.0px;top:12.0px;width:6px;height:6px;background:rgb(242,242,242)"></div></div>
<div class="abs" style="left:0;top:165.81px;width:1015px;height:1px;background:#ebedf0"></div>
<div class="cb" style="left:10px;top:181.01px"></div>
<div class="t" style="left:47px;top:182.21px;font-size:12px;color:#333">390418</div>
<div class="t" style="left:233px;top:182.91px;font-size:11.8px;color:#333">地理<span class="rn">I</span></div>
<div class="t" style="left:418.5px;top:182.61px;font-size:11.5px;letter-spacing:-0.4px;color:#333">1学年向け地理授業</div>
<div class="t" style="left:792px;top:182.91px;font-size:12px;color:#333">34人</div>
<svg class="abs" style="left:984px;top:186.01px" width="14" height="4" viewBox="0 0 14 4"><g fill="#222"><circle cx="1.6" cy="2" r="1.4"/><circle cx="6.8" cy="2" r="1.4"/><circle cx="12" cy="2" r="1.4"/></g></svg>
<div class="abs" style="left:603.0px;top:181.7px;width:48.0px;height:11.9px;overflow:hidden;filter:blur(0.6px)"><div style="position:absolute;left:0.0px;top:0.0px;width:6px;height:6px;background:rgb(210,210,210)"></div><div style="position:absolute;left:6.0px;top:0.0px;width:6px;height:6px;background:rgb(220,220,220)"></div><div style="position:absolute;left:12.0px;top:0.0px;width:6px;height:6px;background:rgb(190,190,190)"></div><div style="position:absolute;left:18.0px;top:0.0px;width:6px;height:6px;background:rgb(190,190,190)"></div><div style="position:absolute;left:24.0px;top:0.0px;width:6px;height:6px;background:rgb(220,220,220)"></div><div style="position:absolute;left:30.0px;top:0.0px;width:6px;height:6px;background:rgb(220,220,220)"></div><div style="position:absolute;left:36.0px;top:0.0px;width:6px;height:6px;background:rgb(220,220,220)"></div><div style="position:absolute;left:42.0px;top:0.0px;width:6px;height:6px;background:rgb(220,220,220)"></div><div style="position:absolute;left:48.0px;top:0.0px;width:6px;height:6px;background:rgb(210,210,210)"></div><div style="position:absolute;left:0.0px;top:6.0px;width:6px;height:6px;background:rgb(205,205,205)"></div><div style="position:absolute;left:6.0px;top:6.0px;width:6px;height:6px;background:rgb(215,215,215)"></div><div style="position:absolute;left:12.0px;top:6.0px;width:6px;height:6px;background:rgb(205,205,205)"></div><div style="position:absolute;left:18.0px;top:6.0px;width:6px;height:6px;background:rgb(225,225,225)"></div><div style="position:absolute;left:24.0px;top:6.0px;width:6px;height:6px;background:rgb(225,225,225)"></div><div style="position:absolute;left:30.0px;top:6.0px;width:6px;height:6px;background:rgb(235,235,235)"></div><div style="position:absolute;left:36.0px;top:6.0px;width:6px;height:6px;background:rgb(215,215,215)"></div><div style="position:absolute;left:42.0px;top:6.0px;width:6px;height:6px;background:rgb(242,242,242)"></div><div style="position:absolute;left:48.0px;top:6.0px;width:6px;height:6px;background:rgb(205,205,205)"></div></div>
<div class="abs" style="left:0;top:207.48px;width:1015px;height:1px;background:#ebedf0"></div>
<div class="cb" style="left:10px;top:222.68px"></div>
<div class="t" style="left:47px;top:223.88px;font-size:12px;color:#333">256300</div>
<div class="t" style="left:233px;top:224.58px;font-size:11.8px;color:#333">心理学<span class="rn">I</span></div>
<div class="t" style="left:418.5px;top:224.28px;font-size:11.5px;letter-spacing:-0.4px;color:#333">1学年向け心理学</div>
<div class="t" style="left:792px;top:224.58px;font-size:12px;color:#333">34人</div>
<svg class="abs" style="left:984px;top:227.68px" width="14" height="4" viewBox="0 0 14 4"><g fill="#222"><circle cx="1.6" cy="2" r="1.4"/><circle cx="6.8" cy="2" r="1.4"/><circle cx="12" cy="2" r="1.4"/></g></svg>
<div class="abs" style="left:603.0px;top:220.0px;width:48.0px;height:15.3px;overflow:hidden;filter:blur(0.6px)"><div style="position:absolute;left:0.0px;top:0.0px;width:6px;height:6px;background:rgb(200,200,200)"></div><div style="position:absolute;left:6.0px;top:0.0px;width:6px;height:6px;background:rgb(230,230,230)"></div><div style="position:absolute;left:12.0px;top:0.0px;width:6px;height:6px;background:rgb(210,210,210)"></div><div style="position:absolute;left:18.0px;top:0.0px;width:6px;height:6px;background:rgb(200,200,200)"></div><div style="position:absolute;left:24.0px;top:0.0px;width:6px;height:6px;background:rgb(238,238,238)"></div><div style="position:absolute;left:30.0px;top:0.0px;width:6px;height:6px;background:rgb(230,230,230)"></div><div style="position:absolute;left:36.0px;top:0.0px;width:6px;height:6px;background:rgb(190,190,190)"></div><div style="position:absolute;left:42.0px;top:0.0px;width:6px;height:6px;background:rgb(230,230,230)"></div><div style="position:absolute;left:48.0px;top:0.0px;width:6px;height:6px;background:rgb(210,210,210)"></div><div style="position:absolute;left:0.0px;top:6.0px;width:6px;height:6px;background:rgb(200,200,200)"></div><div style="position:absolute;left:6.0px;top:6.0px;width:6px;height:6px;background:rgb(212,212,212)"></div><div style="position:absolute;left:12.0px;top:6.0px;width:6px;height:6px;background:rgb(135,135,135)"></div><div style="position:absolute;left:18.0px;top:6.0px;width:6px;height:6px;background:rgb(200,200,200)"></div><div style="position:absolute;left:24.0px;top:6.0px;width:6px;height:6px;background:rgb(212,212,212)"></div><div style="position:absolute;left:30.0px;top:6.0px;width:6px;height:6px;background:rgb(165,165,165)"></div><div style="position:absolute;left:36.0px;top:6.0px;width:6px;height:6px;background:rgb(190,190,190)"></div><div style="position:absolute;left:42.0px;top:6.0px;width:6px;height:6px;background:rgb(165,165,165)"></div><div style="position:absolute;left:48.0px;top:6.0px;width:6px;height:6px;background:rgb(150,150,150)"></div><div style="position:absolute;left:0.0px;top:12.0px;width:6px;height:6px;background:rgb(225,225,225)"></div><div style="position:absolute;left:6.0px;top:12.0px;width:6px;height:6px;background:rgb(215,215,215)"></div><div style="position:absolute;left:12.0px;top:12.0px;width:6px;height:6px;background:rgb(242,242,242)"></div><div style="position:absolute;left:18.0px;top:12.0px;width:6px;height:6px;background:rgb(242,242,242)"></div><div style="position:absolute;left:24.0px;top:12.0px;width:6px;height:6px;background:rgb(242,242,242)"></div><div style="position:absolute;left:30.0px;top:12.0px;width:6px;height:6px;background:rgb(225,225,225)"></div><div style="position:absolute;left:36.0px;top:12.0px;width:6px;height:6px;background:rgb(215,215,215)"></div><div style="position:absolute;left:42.0px;top:12.0px;width:6px;height:6px;background:rgb(242,242,242)"></div><div style="position:absolute;left:48.0px;top:12.0px;width:6px;height:6px;background:rgb(215,215,215)"></div></div>
<div class="abs" style="left:0;top:249.15px;width:1015px;height:1px;background:#ebedf0"></div>
<div class="cb" style="left:10px;top:264.35px"></div>
<div class="t" style="left:47px;top:265.55px;font-size:12px;color:#333">421271</div>
<div class="t" style="left:233px;top:266.25px;font-size:11.8px;color:#333">探究学習<span class="rn">I</span></div>
<div class="t" style="left:418.5px;top:265.95px;font-size:11.5px;letter-spacing:-0.4px;color:#333">1学年向け探究学習授業</div>
<div class="t" style="left:792px;top:266.25px;font-size:12px;color:#333">33人</div>
<svg class="abs" style="left:984px;top:269.35px" width="14" height="4" viewBox="0 0 14 4"><g fill="#222"><circle cx="1.6" cy="2" r="1.4"/><circle cx="6.8" cy="2" r="1.4"/><circle cx="12" cy="2" r="1.4"/></g></svg>
<div class="abs" style="left:603.0px;top:262.0px;width:27.0px;height:16.3px;overflow:hidden;filter:blur(0.6px)"><div style="position:absolute;left:0.0px;top:0.0px;width:6px;height:6px;background:rgb(200,200,200)"></div><div style="position:absolute;left:6.0px;top:0.0px;width:6px;height:6px;background:rgb(220,220,220)"></div><div style="position:absolute;left:12.0px;top:0.0px;width:6px;height:6px;background:rgb(238,238,238)"></div><div style="position:absolute;left:18.0px;top:0.0px;width:6px;height:6px;background:rgb(200,200,200)"></div><div style="position:absolute;left:24.0px;top:0.0px;width:6px;height:6px;background:rgb(200,200,200)"></div><div style="position:absolute;left:0.0px;top:6.0px;width:6px;height:6px;background:rgb(190,190,190)"></div><div style="position:absolute;left:6.0px;top:6.0px;width:6px;height:6px;background:rgb(178,178,178)"></div><div style="position:absolute;left:12.0px;top:6.0px;width:6px;height:6px;background:rgb(165,165,165)"></div><div style="position:absolute;left:18.0px;top:6.0px;width:6px;height:6px;background:rgb(200,200,200)"></div><div style="position:absolute;left:24.0px;top:6.0px;width:6px;height:6px;background:rgb(135,135,135)"></div><div style="position:absolute;left:0.0px;top:12.0px;width:6px;height:6px;background:rgb(205,205,205)"></div><div style="position:absolute;left:6.0px;top:12.0px;width:6px;height:6px;background:rgb(225,225,225)"></div><div style="position:absolute;left:12.0px;top:12.0px;width:6px;height:6px;background:rgb(235,235,235)"></div><div style="position:absolute;left:18.0px;top:12.0px;width:6px;height:6px;background:rgb(225,225,225)"></div><div style="position:absolute;left:24.0px;top:12.0px;width:6px;height:6px;background:rgb(215,215,215)"></div></div>
<div class="abs" style="left:635.0px;top:262.0px;width:75.0px;height:16.3px;overflow:hidden;filter:blur(0.6px)"><div style="position:absolute;left:0.0px;top:0.0px;width:6px;height:6px;background:rgb(238,238,238)"></div><div style="position:absolute;left:6.0px;top:0.0px;width:6px;height:6px;background:rgb(230,230,230)"></div><div style="position:absolute;left:12.0px;top:0.0px;width:6px;height:6px;background:rgb(210,210,210)"></div><div style="position:absolute;left:18.0px;top:0.0px;width:6px;height:6px;background:rgb(220,220,220)"></div><div style="position:absolute;left:24.0px;top:0.0px;width:6px;height:6px;background:rgb(238,238,238)"></div><div style="position:absolute;left:30.0px;top:0.0px;width:6px;height:6px;background:rgb(210,210,210)"></div><div style="position:absolute;left:36.0px;top:0.0px;width:6px;height:6px;background:rgb(210,210,210)"></div><div style="position:absolute;left:42.0px;top:0.0px;width:6px;height:6px;background:rgb(190,190,190)"></div><div style="position:absolute;left:48.0px;top:0.0px;width:6px;height:6px;background:rgb(200,200,200)"></div><div style="position:absolute;left:54.0px;top:0.0px;width:6px;height:6px;background:rgb(190,190,190)"></div><div style="position:absolute;left:60.0px;top:0.0px;width:6px;height:6px;background:rgb(200,200,200)"></div><div style="position:absolute;left:66.0px;top:0.0px;width:6px;height:6px;background:rgb(220,220,220)"></div><div style="position:absolute;left:72.0px;top:0.0px;width:6px;height:6px;background:rgb(200,200,200)"></div><div style="position:absolute;left:0.0px;top:6.0px;width:6px;height:6px;background:rgb(165,165,165)"></div><div style="position:absolute;left:6.0px;top:6.0px;width:6px;height:6px;background:rgb(150,150,150)"></div><div style="position:absolute;left:12.0px;top:6.0px;width:6px;height:6px;background:rgb(178,178,178)"></div><div style="position:absolute;left:18.0px;top:6.0px;width:6px;height:6px;background:rgb(190,190,190)"></div><div style="position:absolute;left:24.0px;top:6.0px;width:6px;height:6px;background:rgb(190,190,190)"></div><div style="position:absolute;left:30.0px;top:6.0px;width:6px;height:6px;background:rgb(212,212,212)"></div><div style="position:absolute;left:36.0px;top:6.0px;width:6px;height:6px;background:rgb(135,135,135)"></div><div style="position:absolute;left:42.0px;top:6.0px;width:6px;height:6px;background:rgb(178,178,178)"></div><div style="position:absolute;left:48.0px;top:6.0px;width:6px;height:6px;background:rgb(200,200,200)"></div><div style="position:absolute;left:54.0px;top:6.0px;width:6px;height:6px;background:rgb(165,165,165)"></div><div style="position:absolute;left:60.0px;top:6.0px;width:6px;height:6px;background:rgb(212,212,212)"></div><div style="position:absolute;left:66.0px;top:6.0px;width:6px;height:6px;background:rgb(200,200,200)"></div><div style="position:absolute;left:72.0px;top:6.0px;width:6px;height:6px;background:rgb(135,135,135)"></div><div style="position:absolute;left:0.0px;top:12.0px;width:6px;height:6px;background:rgb(205,205,205)"></div><div style="position:absolute;left:6.0px;top:12.0px;width:6px;height:6px;background:rgb(235,235,235)"></div><div style="position:absolute;left:12.0px;top:12.0px;width:6px;height:6px;background:rgb(215,215,215)"></div><div style="position:absolute;left:18.0px;top:12.0px;width:6px;height:6px;background:rgb(235,235,235)"></div><div style="position:absolute;left:24.0px;top:12.0px;width:6px;height:6px;background:rgb(215,215,215)"></div><div style="position:absolute;left:30.0px;top:12.0px;width:6px;height:6px;background:rgb(235,235,235)"></div><div style="position:absolute;left:36.0px;top:12.0px;width:6px;height:6px;background:rgb(225,225,225)"></div><div style="position:absolute;left:42.0px;top:12.0px;width:6px;height:6px;background:rgb(205,205,205)"></div><div style="position:absolute;left:48.0px;top:12.0px;width:6px;height:6px;background:rgb(235,235,235)"></div><div style="position:absolute;left:54.0px;top:12.0px;width:6px;height:6px;background:rgb(235,235,235)"></div><div style="position:absolute;left:60.0px;top:12.0px;width:6px;height:6px;background:rgb(235,235,235)"></div><div style="position:absolute;left:66.0px;top:12.0px;width:6px;height:6px;background:rgb(205,205,205)"></div><div style="position:absolute;left:72.0px;top:12.0px;width:6px;height:6px;background:rgb(215,215,215)"></div></div>
<div class="abs" style="left:0;top:290.82px;width:1015px;height:1px;background:#ebedf0"></div>
<div class="cb" style="left:10px;top:306.02px"></div>
<div class="t" style="left:47px;top:307.22px;font-size:12px;color:#333">797053</div>
<div class="t" style="left:233px;top:307.92px;font-size:11.8px;color:#333">数学<span class="rn">I</span></div>
<div class="t" style="left:418.5px;top:307.62px;font-size:11.5px;letter-spacing:-0.4px;color:#333">1学年向け数学授業</div>
<div class="t" style="left:792px;top:307.92px;font-size:12px;color:#333">38人</div>
<svg class="abs" style="left:984px;top:311.02px" width="14" height="4" viewBox="0 0 14 4"><g fill="#222"><circle cx="1.6" cy="2" r="1.4"/><circle cx="6.8" cy="2" r="1.4"/><circle cx="12" cy="2" r="1.4"/></g></svg>
<div class="abs" style="left:603.0px;top:304.7px;width:48.0px;height:15.3px;overflow:hidden;filter:blur(0.6px)"><div style="position:absolute;left:0.0px;top:0.0px;width:6px;height:6px;background:rgb(200,200,200)"></div><div style="position:absolute;left:6.0px;top:0.0px;width:6px;height:6px;background:rgb(200,200,200)"></div><div style="position:absolute;left:12.0px;top:0.0px;width:6px;height:6px;background:rgb(190,190,190)"></div><div style="position:absolute;left:18.0px;top:0.0px;width:6px;height:6px;background:rgb(200,200,200)"></div><div style="position:absolute;left:24.0px;top:0.0px;width:6px;height:6px;background:rgb(230,230,230)"></div><div style="position:absolute;left:30.0px;top:0.0px;width:6px;height:6px;background:rgb(220,220,220)"></div><div style="position:absolute;left:36.0px;top:0.0px;width:6px;height:6px;background:rgb(238,238,238)"></div><div style="position:absolute;left:42.0px;top:0.0px;width:6px;height:6px;background:rgb(200,200,200)"></div><div style="position:absolute;left:48.0px;top:0.0px;width:6px;height:6px;background:rgb(230,230,230)"></div><div style="position:absolute;left:0.0px;top:6.0px;width:6px;height:6px;background:rgb(212,212,212)"></div><div style="position:absolute;left:6.0px;top:6.0px;width:6px;height:6px;background:rgb(190,190,190)"></div><div style="position:absolute;left:12.0px;top:6.0px;width:6px;height:6px;background:rgb(178,178,178)"></div><div style="position:absolute;left:18.0px;top:6.0px;width:6px;height:6px;background:rgb(200,200,200)"></div><div style="position:absolute;left:24.0px;top:6.0px;width:6px;height:6px;background:rgb(165,165,165)"></div><div style="position:absolute;left:30.0px;top:6.0px;width:6px;height:6px;background:rgb(150,150,150)"></div><div style="position:absolute;left:36.0px;top:6.0px;width:6px;height:6px;background:rgb(190,190,190)"></div><div style="position:absolute;left:42.0px;top:6.0px;width:6px;height:6px;background:rgb(190,190,190)"></div><div style="position:absolute;left:48.0px;top:6.0px;width:6px;height:6px;background:rgb(150,150,150)"></div><div style="position:absolute;left:0.0px;top:12.0px;width:6px;height:6px;background:rgb(205,205,205)"></div><div style="position:absolute;left:6.0px;top:12.0px;width:6px;height:6px;background:rgb(205,205,205)"></div><div style="position:absolute;left:12.0px;top:12.0px;width:6px;height:6px;background:rgb(205,205,205)"></div><div style="position:absolute;left:18.0px;top:12.0px;width:6px;height:6px;background:rgb(242,242,242)"></div><div style="position:absolute;left:24.0px;top:12.0px;width:6px;height:6px;background:rgb(215,215,215)"></div><div style="position:absolute;left:30.0px;top:12.0px;width:6px;height:6px;background:rgb(235,235,235)"></div><div style="position:absolute;left:36.0px;top:12.0px;width:6px;height:6px;background:rgb(215,215,215)"></div><div style="position:absolute;left:42.0px;top:12.0px;width:6px;height:6px;background:rgb(215,215,215)"></div><div style="position:absolute;left:48.0px;top:12.0px;width:6px;height:6px;background:rgb(205,205,205)"></div></div>
</div><!-- table header -->
<div class="cb" style="left:244px;top:315.2px"></div>
<div class="t" style="left:281px;top:315px;font-size:12px;color:#333">授業コード</div>
<div class="t" style="left:652px;top:315px;font-size:11.5px;color:#333">説明</div>
<svg class="abs" style="left:681.5px;top:315px" width="8" height="12" viewBox="0 0 8 12"><path d="M1.3 4.2 L4 1.5 L6.7 4.2 M1.3 7.8 L4 10.5 L6.7 7.8" fill="none" stroke="#333" stroke-width="1.3"/></svg>
<div class="t" style="left:837px;top:315px;font-size:12px;color:#333">先生</div>
<svg class="abs" style="left:866.5px;top:315px" width="8" height="12" viewBox="0 0 8 12"><path d="M1.3 4.2 L4 1.5 L6.7 4.2 M1.3 7.8 L4 10.5 L6.7 7.8" fill="none" stroke="#333" stroke-width="1.3"/></svg>
<div class="t" style="left:1022.5px;top:315px;font-size:12px;color:#333">登録生徒</div>
<svg class="abs" style="left:1075.5px;top:315px" width="8" height="12" viewBox="0 0 8 12"><path d="M1.3 4.2 L4 1.5 L6.7 4.2 M1.3 7.8 L4 10.5 L6.7 7.8" fill="none" stroke="#333" stroke-width="1.3"/></svg>
<!-- scrollbar -->
<div class="abs" style="left:1249px;top:340px;width:10px;height:317px;background:#f1f1f1"></div>
<div class="abs" style="left:1250px;top:352px;width:8.5px;height:110.5px;background:#c1c1c1"></div>
<svg class="abs" style="left:1251.5px;top:343.5px" width="6" height="4" viewBox="0 0 6 4"><path d="M0 4 L3 0.5 L6 4 Z" fill="#a3a3a3"/></svg>
<svg class="abs" style="left:1251.5px;top:648.5px" width="6" height="4" viewBox="0 0 6 4"><path d="M0 0 L3 3.5 L6 0 Z" fill="#505050"/></svg>
<!-- FAB -->
<div class="abs" style="left:1220px;top:660px;width:46.7px;height:46.7px;border-radius:50%;background:#0c7599;box-shadow:0 2px 5px rgba(0,0,0,.25)"></div>
<svg class="abs" style="left:1237px;top:676.5px" width="13" height="13" viewBox="0 0 13 13"><path d="M6.5 0.5 V12.5 M0.5 6.5 H12.5" stroke="#fff" stroke-width="2"/></svg>
<!-- menu 1 -->
<div class="abs" style="left:302px;top:290.5px;width:90.5px;height:52.5px;background:#fff;border-radius:4px;box-shadow:0 2px 6px rgba(0,0,0,.22)"></div>
<div class="abs" style="left:302px;top:296px;width:90.5px;height:41.5px;background:#ececec"></div>
<div class="t" style="left:315px;top:310px;font-size:13px;color:#333">新規登録</div>
<svg class="abs" style="left:377.5px;top:313.5px" width="5" height="7" viewBox="0 0 5 7"><path d="M0 0 L4.5 3.5 L0 7 Z" fill="#666"/></svg>
<!-- submenu -->
<div class="abs" style="left:395px;top:290px;width:238px;height:92.5px;background:#fff;border-radius:4px;box-shadow:0 2px 7px rgba(0,0,0,.22)"></div>
<div class="abs" style="left:395.5px;top:295.8px;width:234.5px;height:37.5px;border:5px solid #e5650d;background:#fff"></div>
<div class="t" style="left:408.5px;top:310px;font-size:13px;letter-spacing:-0.55px;color:#333">1.登録用テンプレートをダウンロード</div>
<div class="t" style="left:408.5px;top:349.5px;font-size:13px;letter-spacing:-0.45px;color:#333">2.登録用データをアップロード</div>
</body>
</html>
